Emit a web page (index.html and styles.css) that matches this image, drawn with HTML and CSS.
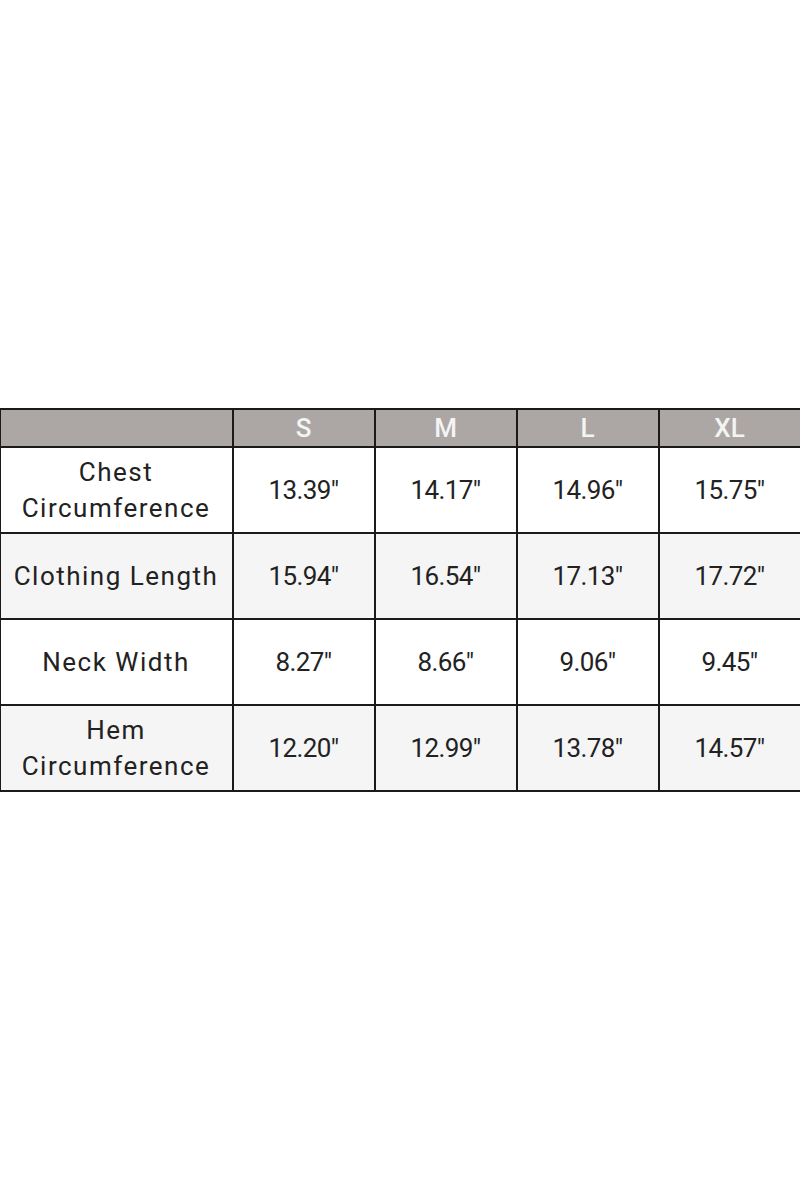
FILE: index.html
```html
<!DOCTYPE html>
<html>
<head>
<meta charset="utf-8">
<link rel="stylesheet" href="styles.css">
</head>
<body>
<div class="page">
  <table class="size-table">
    <colgroup>
      <col class="c-label"><col class="c-size"><col class="c-size"><col class="c-size"><col class="c-size">
    </colgroup>
    <thead>
      <tr class="head"><th></th><th>S</th><th>M</th><th>L</th><th>XL</th></tr>
    </thead>
    <tbody>
      <tr class="row odd"><td class="label">Chest<br>Circumference</td><td>13.39"</td><td>14.17"</td><td>14.96"</td><td>15.75"</td></tr>
      <tr class="row even"><td class="label">Clothing Length</td><td>15.94"</td><td>16.54"</td><td>17.13"</td><td>17.72"</td></tr>
      <tr class="row odd"><td class="label">Neck Width</td><td>8.27"</td><td>8.66"</td><td>9.06"</td><td>9.45"</td></tr>
      <tr class="row even"><td class="label">Hem<br>Circumference</td><td>12.20"</td><td>12.99"</td><td>13.78"</td><td>14.57"</td></tr>
    </tbody>
  </table>
</div>
</body>
</html>
```
FILE: styles.css
```css
html, body {
  margin: 0;
  padding: 0;
  background: #ffffff;
}
.page {
  height: 1200px;
  width: 800px;
  display: flex;
  align-items: center;
  justify-content: center;
}
.size-table {
  width: 800px;
  border-collapse: collapse;
  table-layout: fixed;
  font-family: Roboto, "Liberation Sans", sans-serif;
  color: #222222;
  font-size: 26px;
}
.c-label { width: 233px; }
.c-size { width: 142px; }
.size-table th,
.size-table td {
  border: 2px solid #1a1a1a;
  text-align: center;
  vertical-align: middle;
  padding: 0;
}
.head th {
  background: #aca7a5;
  color: #f4f4f4;
  font-weight: 500;
  height: 36px;
  line-height: 36px;
}
.row td {
  height: 84px;
  line-height: 36px;
  letter-spacing: -0.6px;
}
.row td.label {
  letter-spacing: 1.5px;
}
.row.odd td { background: #ffffff; }
.row.even td { background: #f5f5f5; }
```
